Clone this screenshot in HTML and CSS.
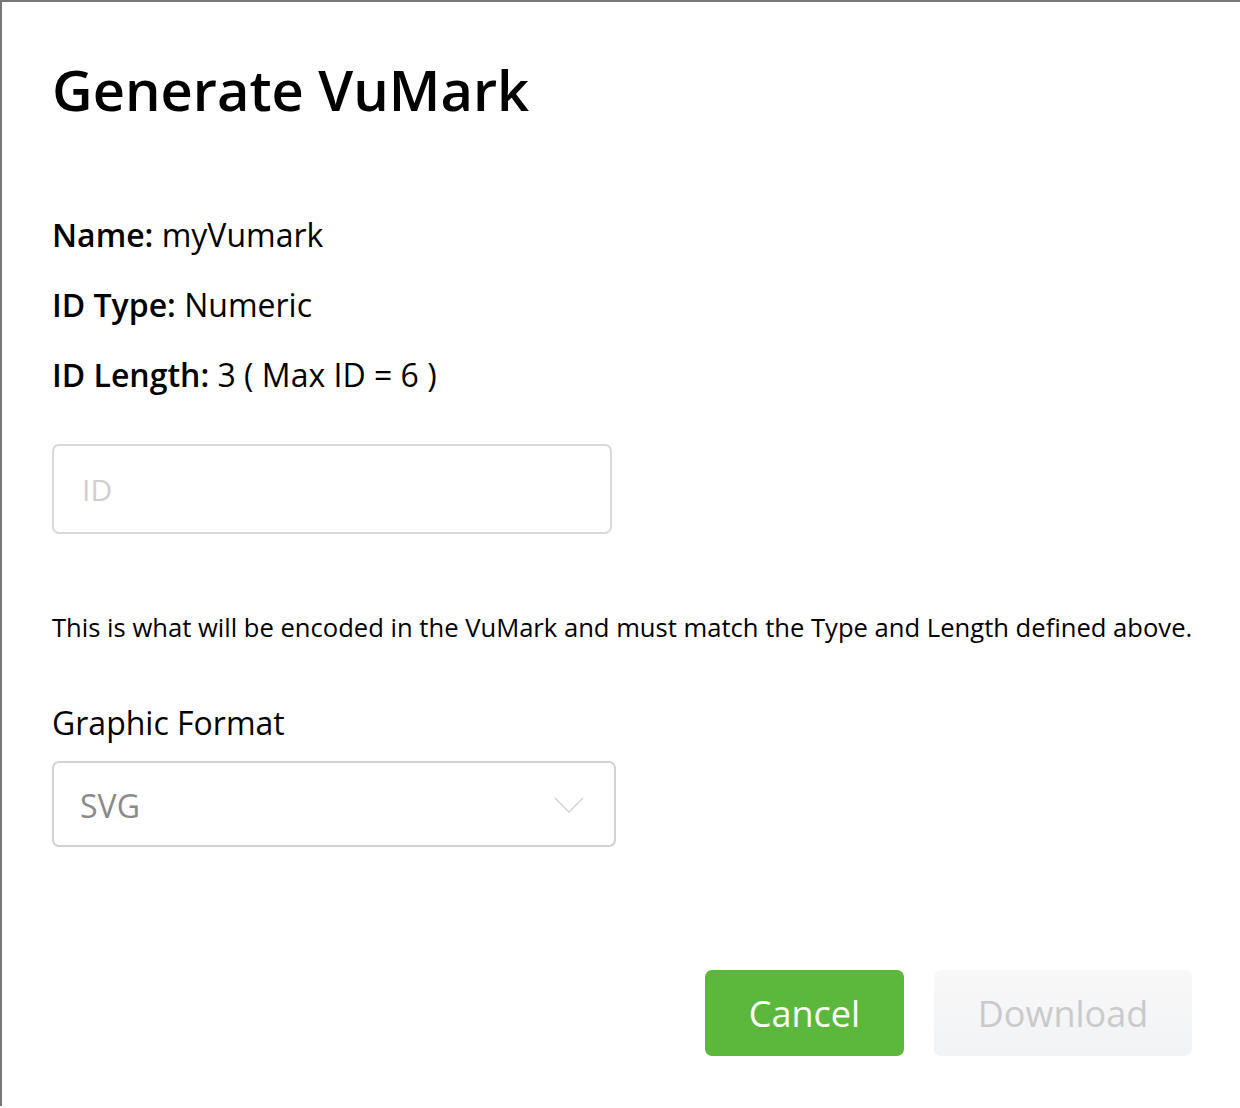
FILE: index.html
```html
<!DOCTYPE html>
<html lang="en">
<head>
    <meta charset="UTF-8">
    <meta name="viewport" content="width=device-width, initial-scale=1.0">
    <title>Generate VuMark</title>
    <link rel="stylesheet" href="styles.css">
</head>
<body>
    <div class="modal">
        <h1>Generate VuMark</h1>

        <div class="info">
            <p><b>Name:</b> myVumark</p>
            <p><b>ID Type:</b> Numeric</p>
            <p><b>ID Length:</b> 3 ( Max ID = 6 )</p>
        </div>

        <input type="text" class="id-input" placeholder="ID">

        <p class="hint">This is what will be encoded in the VuMark and must match the Type and Length defined above.</p>

        <label class="format-label">Graphic Format</label>
        <div class="select">
            <span>SVG</span>
            <svg width="30" height="16" viewBox="0 0 30 16">
                <path d="M1 1 L15 15 L29 1" fill="none" stroke="#d0d0d0" stroke-width="1.3"/>
            </svg>
        </div>

        <div class="actions">
            <button class="btn btn-cancel">Cancel</button>
            <button class="btn btn-download" disabled>Download</button>
        </div>
    </div>
</body>
</html>
```

FILE: styles.css
```css
body {
    margin: 0;
    font-family: "Open Sans", Arial, sans-serif;
    color: #000;
    background: #fff;
}
.modal {
    height: 1106px;
    border-top: 2px solid #777;
    border-left: 2px solid #777;
    padding: 0 48px 0 50px;
    box-sizing: border-box;
}
h1 {
    margin: 0;
    padding-top: 49px;
    font-size: 56px;
    font-weight: 600;
    line-height: 76px;
}
.info {
    margin-top: 86px;
}
.info p {
    margin: 0 0 26px;
    font-size: 32px;
    line-height: 44px;
}
.info p:last-child {
    margin-bottom: 0;
}
.info b {
    font-weight: 600;
}
.id-input {
    display: block;
    margin-top: 47px;
    width: 560px;
    height: 90px;
    box-sizing: border-box;
    border: 2px solid #d6d9dd;
    border-radius: 7px;
    padding: 0 28px;
    font-family: inherit;
    font-size: 30px;
    outline: none;
}
.id-input::placeholder {
    color: #cfcfcf;
}
.hint {
    margin: 77px 0 0;
    font-size: 25.6px;
    line-height: 34px;
    white-space: nowrap;
}
.format-label {
    display: block;
    margin-top: 56px;
    font-size: 32px;
    line-height: 44px;
}
.select {
    margin-top: 16px;
    width: 564px;
    height: 86px;
    box-sizing: border-box;
    border: 2px solid #d2d2d2;
    border-radius: 7px;
    padding: 2px 30px 0 26px;
    display: flex;
    align-items: center;
    justify-content: space-between;
    font-size: 32px;
    color: #8a8a8a;
}
.actions {
    margin-top: 123px;
    display: flex;
    justify-content: flex-end;
    gap: 30px;
}
.btn {
    height: 86px;
    border: none;
    border-radius: 7px;
    font-family: inherit;
    font-size: 36px;
}
.btn-cancel {
    width: 199px;
    background: #5cb83c;
    color: #fff;
}
.btn-download {
    width: 258px;
    background: linear-gradient(#f8f8f9, #f2f3f4);
    color: #cacaca;
}
```
